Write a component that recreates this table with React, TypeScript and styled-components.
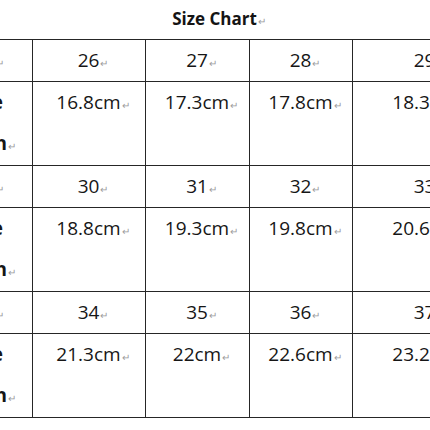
import React from 'react';
import styled, { createGlobalStyle } from 'styled-components';

const GlobalStyle = createGlobalStyle`
    html, body {
        margin: 0;
        padding: 0;
        background: #ffffff;
        overflow: hidden;
    }
    body {
        font-family: 'Open Sans', 'Liberation Sans', sans-serif;
        color: #161616;
    }
`;

const Page = styled.div`
    width: 430px;
    height: 430px;
    overflow: hidden;
    background: #ffffff;
`;

const Title = styled.div`
    height: 39px;
    line-height: 38px;
    font-size: 17px;
    font-weight: 700;
    text-align: center;
    color: #141414;
`;

const Table = styled.table`
    border-collapse: collapse;
    table-layout: fixed;
    width: 575px;
    margin-left: -78px;
`;

const Cell = styled.td<{ $tall?: boolean; $label?: boolean }>`
    border: 1px solid #262626;
    padding: 0 ${(p) => (p.$label && p.$tall ? '6px' : '0')} 0 0;
    height: ${(p) => (p.$tall ? '83px' : '41px')};
    line-height: 41px;
    vertical-align: top;
    text-align: center;
    font-size: 19px;
    font-weight: ${(p) => (p.$label ? 700 : 400)};
    white-space: nowrap;
`;

const Mark = styled.span`
    display: inline-block;
    width: 0;
    margin-left: 1px;
    font-size: 10px;
    line-height: 0;
    font-weight: 400;
    color: #9c9c9c;
`;

const COLUMN_WIDTHS = [110, 113, 104, 103, 145];

type Group = { sizes: string[]; lengths: string[] };

const GROUPS: Group[] = [
    { sizes: ['26', '27', '28', '29'], lengths: ['16.8cm', '17.3cm', '17.8cm', '18.3cm'] },
    { sizes: ['30', '31', '32', '33'], lengths: ['18.8cm', '19.3cm', '19.8cm', '20.6cm'] },
    { sizes: ['34', '35', '36', '37'], lengths: ['21.3cm', '22cm', '22.6cm', '23.2cm'] },
];

function Text({ children }: { children: React.ReactNode }) {
    return (
        <>
            {children}
            <Mark>↵</Mark>
        </>
    );
}

export default function App() {
    return (
        <Page>
            <GlobalStyle />
            <Title>
                <Text>Size Chart</Text>
            </Title>
            <Table>
                <colgroup>
                    {COLUMN_WIDTHS.map((w, i) => (
                        <col key={i} style={{ width: w }} />
                    ))}
                </colgroup>
                <tbody>
                    {GROUPS.map((group, gi) => (
                        <React.Fragment key={gi}>
                            <tr>
                                <Cell $label>
                                    <Text>Size</Text>
                                </Cell>
                                {group.sizes.map((s) => (
                                    <Cell key={s}>
                                        <Text>{s}</Text>
                                    </Cell>
                                ))}
                            </tr>
                            <tr>
                                <Cell $label $tall>
                                    Insole
                                    <br />
                                    <Text>Length</Text>
                                </Cell>
                                {group.lengths.map((l) => (
                                    <Cell key={l} $tall>
                                        <Text>{l}</Text>
                                    </Cell>
                                ))}
                            </tr>
                        </React.Fragment>
                    ))}
                </tbody>
            </Table>
        </Page>
    );
}
